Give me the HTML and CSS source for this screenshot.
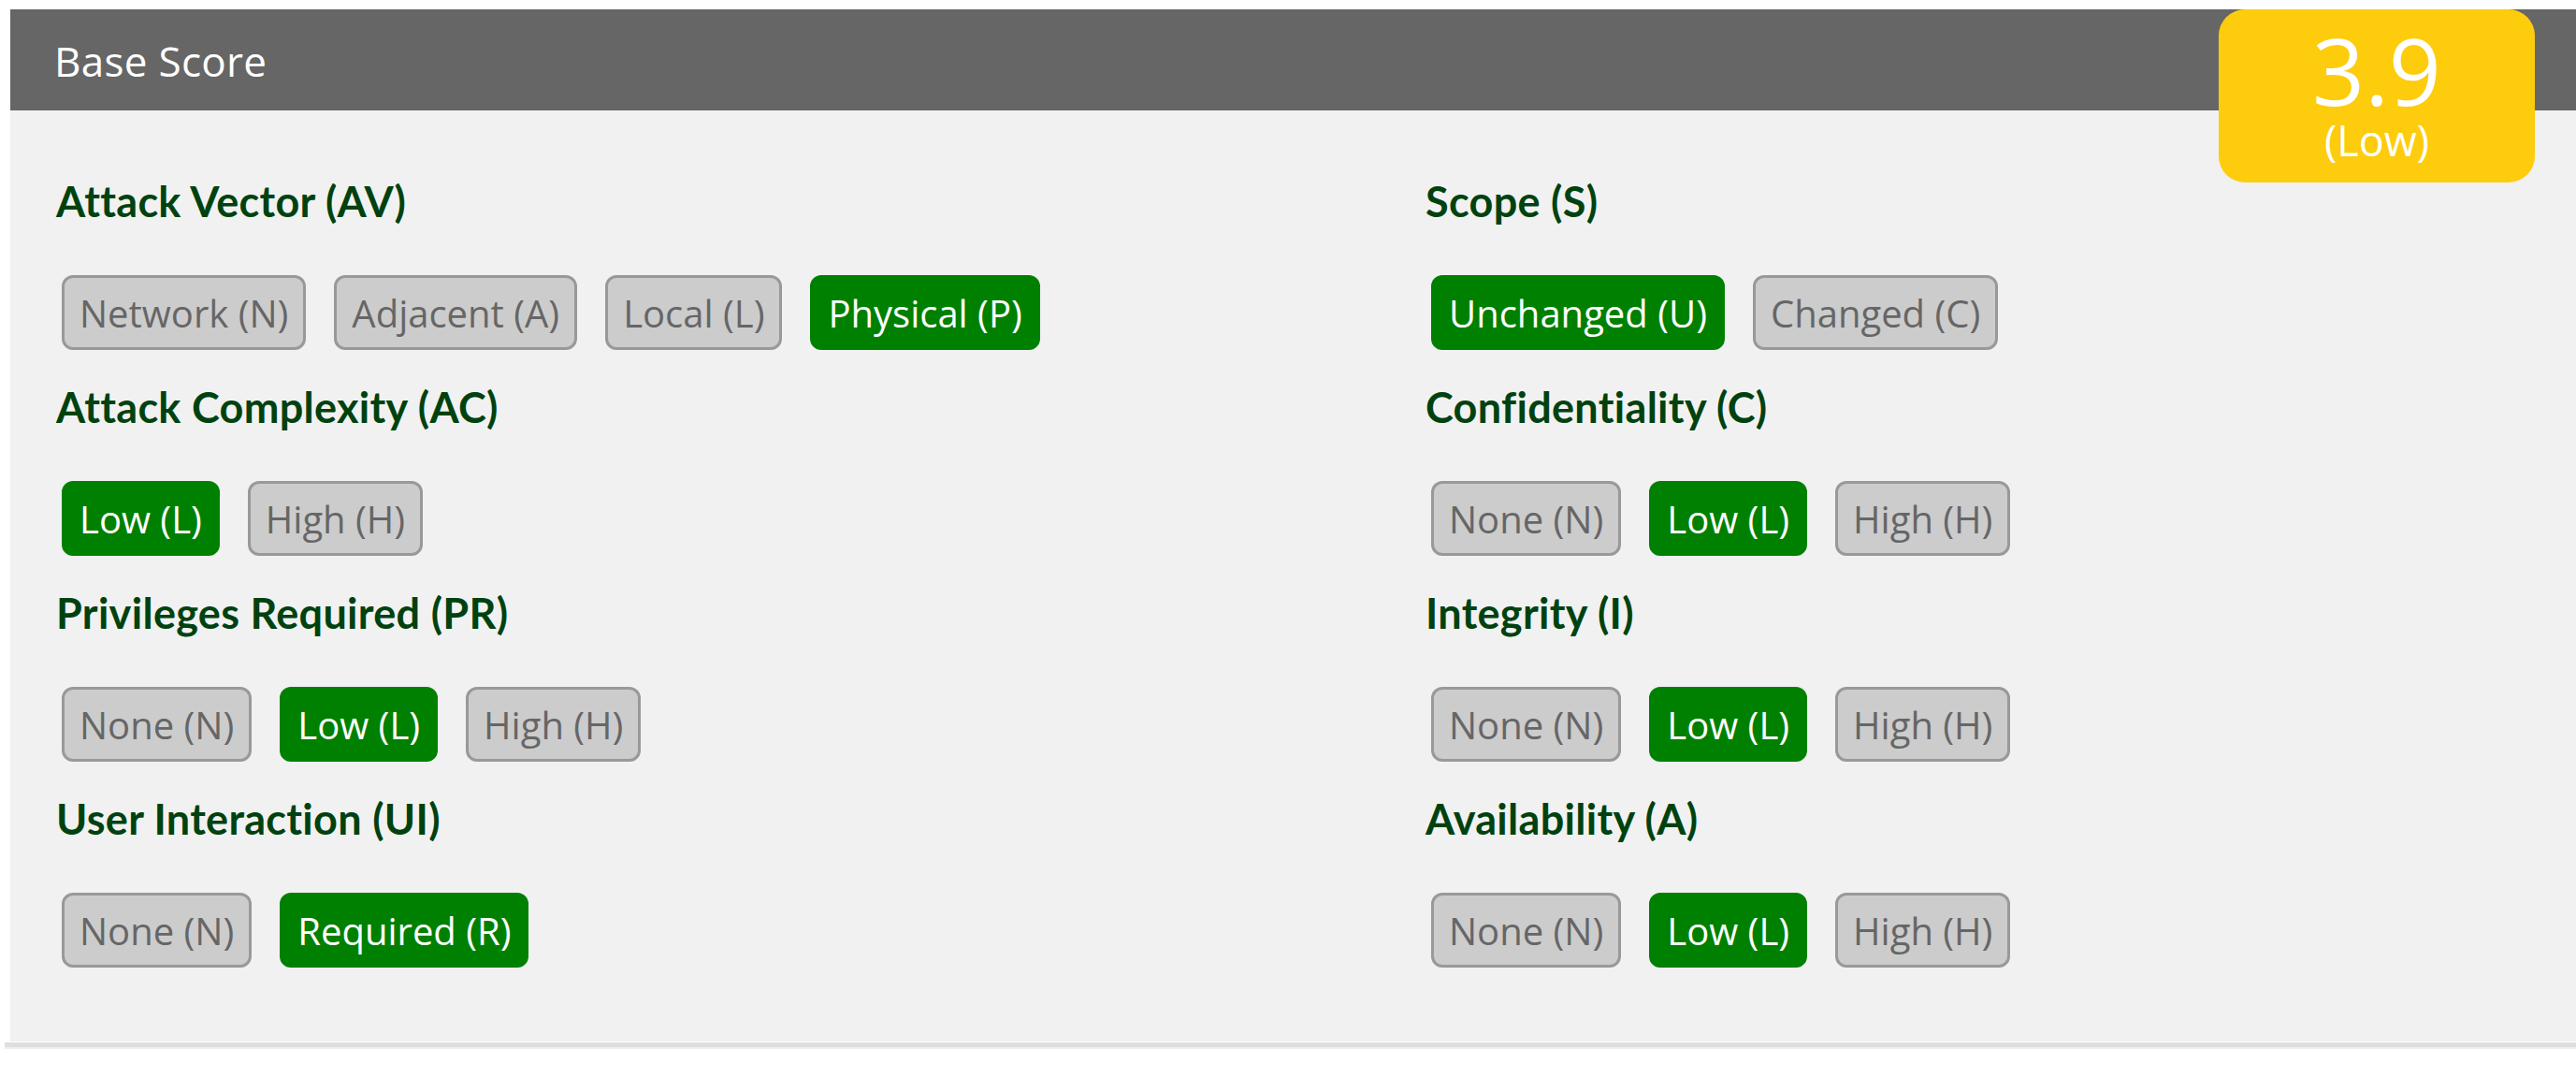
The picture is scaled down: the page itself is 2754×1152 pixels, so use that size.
FILE: index.html
```html
<!DOCTYPE html>
<html lang="en">
<head>
<meta charset="utf-8">
<title>CVSS Base Score</title>
<link rel="stylesheet" href="styles.css">
</head>
<body>
<div class="page">
  <div class="calculator">
    <div class="score-bar">Base Score</div>
    <div class="score-badge">
      <div class="score-value">3.9</div>
      <div class="score-rating">(Low)</div>
    </div>
    <div class="metrics">
      <section class="metric">
        <h3 class="metric-title">Attack Vector (AV)</h3>
        <div class="options">
          <span class="opt">Network (N)</span>
          <span class="opt">Adjacent (A)</span>
          <span class="opt">Local (L)</span>
          <span class="opt on">Physical (P)</span>
        </div>
      </section>
      <section class="metric">
        <h3 class="metric-title">Scope (S)</h3>
        <div class="options">
          <span class="opt on">Unchanged (U)</span>
          <span class="opt">Changed (C)</span>
        </div>
      </section>
      <section class="metric">
        <h3 class="metric-title">Attack Complexity (AC)</h3>
        <div class="options">
          <span class="opt on">Low (L)</span>
          <span class="opt">High (H)</span>
        </div>
      </section>
      <section class="metric">
        <h3 class="metric-title">Confidentiality (C)</h3>
        <div class="options">
          <span class="opt">None (N)</span>
          <span class="opt on">Low (L)</span>
          <span class="opt">High (H)</span>
        </div>
      </section>
      <section class="metric">
        <h3 class="metric-title">Privileges Required (PR)</h3>
        <div class="options">
          <span class="opt">None (N)</span>
          <span class="opt on">Low (L)</span>
          <span class="opt">High (H)</span>
        </div>
      </section>
      <section class="metric">
        <h3 class="metric-title">Integrity (I)</h3>
        <div class="options">
          <span class="opt">None (N)</span>
          <span class="opt on">Low (L)</span>
          <span class="opt">High (H)</span>
        </div>
      </section>
      <section class="metric">
        <h3 class="metric-title">User Interaction (UI)</h3>
        <div class="options">
          <span class="opt">None (N)</span>
          <span class="opt on">Required (R)</span>
        </div>
      </section>
      <section class="metric">
        <h3 class="metric-title">Availability (A)</h3>
        <div class="options">
          <span class="opt">None (N)</span>
          <span class="opt on">Low (L)</span>
          <span class="opt">High (H)</span>
        </div>
      </section>
    </div>
  </div>
  <div class="rule"></div>
</div>
</body>
</html>
```

FILE: styles.css
```css
html, body {
  margin: 0;
  padding: 0;
  background: #ffffff;
}

body {
  font-family: "Open Sans", "Liberation Sans", sans-serif;
}

.page {
  padding-top: 10px;
}

.calculator {
  position: relative;
  margin-left: 11px;
}

.score-bar {
  height: 108px;
  background: #666666;
  color: #ffffff;
  font-size: 44px;
  line-height: 60px;
  display: flex;
  align-items: center;
  padding-left: 47px;
  padding-top: 2px;
  box-sizing: border-box;
  letter-spacing: 0.3px;
}

.score-badge {
  position: absolute;
  top: 0;
  right: 44px;
  width: 338px;
  height: 185px;
  box-sizing: border-box;
  background: #fdcc0d;
  border-radius: 28px;
  color: #ffffff;
  text-align: center;
  padding-top: 16px;
}

.score-value {
  font-size: 98px;
  line-height: 98px;
}

.score-rating {
  font-size: 45px;
  line-height: 51px;
}

.metrics {
  background: #f1f1f1;
  padding: 70px 0 79px 49px;
  display: grid;
  grid-template-columns: 1464px 1fr;
  row-gap: 34px;
}

.metric-title {
  margin: 0;
  font-family: "Lato", "Open Sans", sans-serif;
  font-weight: 700;
  font-size: 45px;
  line-height: 54px;
  letter-spacing: 0.3px;
  color: #00420f;
}

.options {
  display: flex;
  gap: 30px;
  margin-top: 52px;
  margin-left: 6px;
}

.opt {
  display: block;
  height: 80px;
  box-sizing: border-box;
  padding: 8px 16px 6px;
  border: 3px solid #999999;
  border-radius: 12px;
  background: #cccccc;
  color: #666666;
  font-size: 40px;
  line-height: 60px;
  white-space: nowrap;
}

.opt.on {
  background: #008000;
  border-color: #008000;
  color: #ffffff;
}

.rule {
  margin-left: 5px;
  margin-top: 1px;
  height: 5px;
  background: #dedede;
  border-bottom: 2px solid #efefef;
}
```
